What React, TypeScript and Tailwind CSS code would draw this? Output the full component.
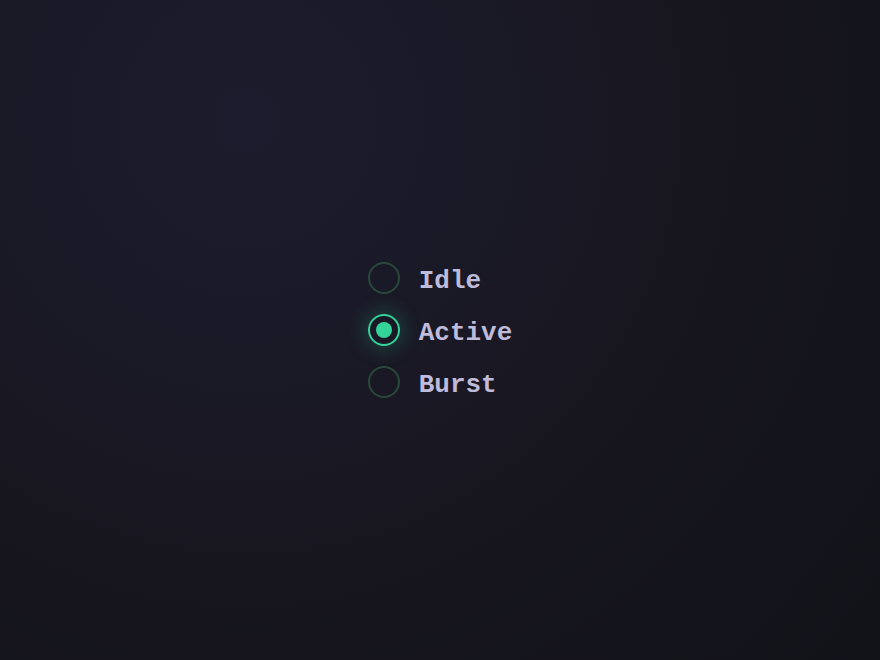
import React, { useState } from "react";

const options = ["Idle", "Active", "Burst"];

const App: React.FC = () => {
  const [selected, setSelected] = useState("Active");

  return (
    <div className="flex h-[660px] w-full items-center justify-center bg-[radial-gradient(circle_at_28%_18%,#1d1c2e_0%,#17161f_55%,#121219_100%)]">
      <div className="flex flex-col gap-5">
        {options.map((opt) => {
          const active = opt === selected;
          return (
            <button
              key={opt}
              className="flex items-center gap-[19px] outline-none"
              onClick={() => setSelected(opt)}
            >
              <span
                className={
                  active
                    ? "flex h-8 w-8 items-center justify-center rounded-full border-2 border-[#34d399] shadow-[0_0_20px_4px_rgba(52,211,153,0.22)]"
                    : "flex h-8 w-8 items-center justify-center rounded-full border-2 border-[#284a39]"
                }
              >
                {active && <span className="h-4 w-4 rounded-full bg-[#34d399]" />}
              </span>
              <span className="h-8 font-['Liberation_Mono',monospace] text-[26px] leading-[38px] font-bold text-[#bfbbda]">
                {opt}
              </span>
            </button>
          );
        })}
      </div>
    </div>
  );
};

export default App;
